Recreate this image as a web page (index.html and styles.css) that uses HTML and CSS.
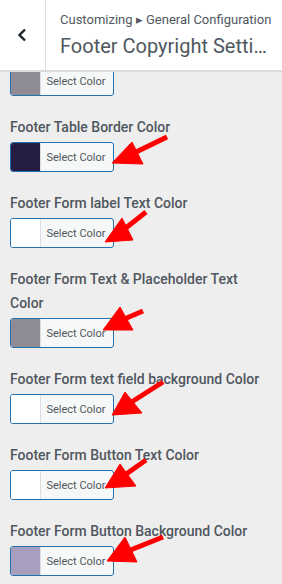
FILE: index.html
```html
<!DOCTYPE html>
<html lang="en">
<head>
    <meta charset="UTF-8" />
    <meta name="viewport" content="width=device-width, initial-scale=1.0" />
    <link rel="stylesheet" href="styles.css">
</head>
<body>
    <header class="panel-head">
        <button class="back" aria-label="Back">
            <svg width="10" height="14" viewBox="0 0 10 14"><path d="M8 1.5 L2.5 7 L8 12.5" fill="none" stroke="#1d2327" stroke-width="2.4" /></svg>
        </button>
        <div class="head-text">
            <span class="crumbs">Customizing &#9656; General Configuration</span>
            <h1>Footer Copyright Settings</h1>
        </div>
    </header>
    <main class="controls">
        <div class="control">
            <button class="picker"><span class="swatch swatch--gray"></span><span class="picker-label">Select Color</span></button>
        </div>
        <div class="control">
            <label>Footer Table Border Color</label>
            <button class="picker"><span class="swatch swatch--navy"></span><span class="picker-label">Select Color</span></button>
        </div>
        <div class="control">
            <label>Footer Form label Text Color</label>
            <button class="picker"><span class="swatch"></span><span class="picker-label">Select Color</span></button>
        </div>
        <div class="control">
            <label>Footer Form Text &amp; Placeholder Text Color</label>
            <button class="picker"><span class="swatch swatch--gray"></span><span class="picker-label">Select Color</span></button>
        </div>
        <div class="control">
            <label>Footer Form text field background Color</label>
            <button class="picker"><span class="swatch"></span><span class="picker-label">Select Color</span></button>
        </div>
        <div class="control">
            <label>Footer Form Button Text Color</label>
            <button class="picker"><span class="swatch"></span><span class="picker-label">Select Color</span></button>
        </div>
        <div class="control">
            <label>Footer Form Button Background Color</label>
            <button class="picker"><span class="swatch swatch--lilac"></span><span class="picker-label">Select Color</span></button>
        </div>
    </main>
    <!-- annotation arrows drawn over the screenshot -->
    <svg class="arrows" width="282" height="584" viewBox="0 0 282 584">
        <g fill="#ff0000" stroke="#ff0000">
            <line x1="167" y1="137" x2="134" y2="153" stroke-width="5" />
            <polygon points="112,163 132,142 143,164" stroke-width="1" />

            <line x1="146" y1="212" x2="122" y2="231" stroke-width="5" />
            <polygon points="105,242 122,218 133,240" stroke-width="1" />

            <line x1="143" y1="311" x2="122" y2="320" stroke-width="5" />
            <polygon points="103,330 120,307 133,330" stroke-width="1" />

            <line x1="163" y1="382" x2="130" y2="403" stroke-width="5" />
            <polygon points="112,415 125,392 142,413" stroke-width="1" />

            <line x1="146" y1="460" x2="122" y2="477" stroke-width="5" />
            <polygon points="105,488 120,464 136,486" stroke-width="1" />

            <line x1="163" y1="537" x2="128" y2="551" stroke-width="5" />
            <polygon points="107,561 125,537 137,562" stroke-width="1" />
        </g>
    </svg>
</body>
</html>
```

FILE: styles.css
```css
html, body {
    margin: 0;
    padding: 0;
    font-family: Roboto, 'Liberation Sans', sans-serif;
}
* {
    box-sizing: border-box;
}
body {
    background-color: #eeeeee;
    color: #50575e;
    width: 282px;
    height: 584px;
    overflow: hidden;
    position: relative;
}
.panel-head {
    position: relative;
    z-index: 1;
    display: flex;
    height: 72px;
    background-color: #fff;
    border-bottom: 2px solid #dcdcde;
}
.back {
    width: 46px;
    height: 70px;
    padding: 0;
    margin: 0;
    border: none;
    border-right: 1px solid #dcdcde;
    background: #fff;
    display: flex;
    align-items: center;
    justify-content: center;
}
.back svg {
    display: block;
    margin-left: -2px;
}
.head-text {
    flex: 1;
    min-width: 0;
    padding: 12px 10px 0 14px;
}
.crumbs {
    display: block;
    font-size: 13px;
    line-height: 16px;
    white-space: nowrap;
}
h1 {
    margin: 6px 0 0;
    font-size: 20px;
    font-weight: 400;
    line-height: 24px;
    white-space: nowrap;
    overflow: hidden;
    text-overflow: ellipsis;
}
.controls {
    margin-top: -6px;
    padding: 0 10px;
}
.control {
    margin-bottom: 17px;
}
.control label {
    display: block;
    padding-top: 2px;
    font-size: 14px;
    font-weight: 500;
    line-height: 24px;
    margin-bottom: 3px;
}
.picker {
    display: flex;
    width: 104px;
    height: 30px;
    padding: 0;
    margin: 0;
    border: 1px solid #2271b1;
    border-radius: 3px;
    background-color: #f6f7f7;
    overflow: hidden;
    font-family: inherit;
}
.swatch {
    width: 30px;
    height: 100%;
    background-color: #fff;
    border-right: 1px solid #dcdcde;
}
.swatch--gray {
    background-color: #8f8b94;
}
.swatch--navy {
    background-color: #261d42;
}
.swatch--lilac {
    background-color: #a89fbe;
}
.picker-label {
    flex: 1;
    align-self: center;
    font-size: 11px;
    color: #50575e;
    text-align: center;
    padding-right: 2px;
}
.arrows {
    position: absolute;
    left: 0;
    top: 0;
    z-index: 2;
    pointer-events: none;
}
```
